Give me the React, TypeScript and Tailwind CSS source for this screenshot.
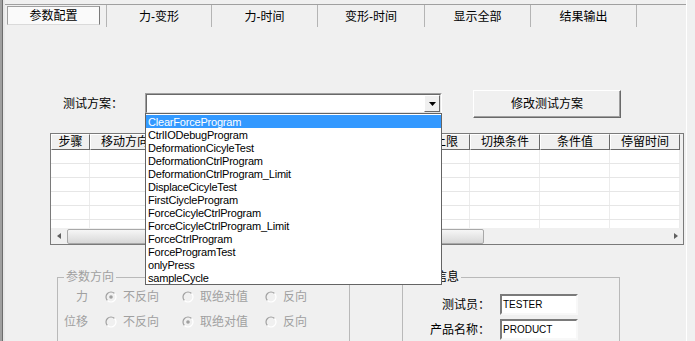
import React from 'react';

const tabs: [string, number][] = [
  ['参数配置', 102],
  ['力-变形', 105],
  ['力-时间', 106],
  ['变形-时间', 107],
  ['显示全部', 106],
  ['结果输出', 106],
];

const columns: [string, number][] = [
  ['步骤', 39],
  ['移动方向', 70],
  ['控制方式', 70],
  ['目标值', 70],
  ['速度', 60],
  ['下限', 62],
  ['上限', 48],
  ['切换条件', 70],
  ['条件值', 70],
  ['停留时间', 70],
];

const programs = [
  'ClearForceProgram',
  'CtrlIODebugProgram',
  'DeformationCicyleTest',
  'DeformationCtrlProgram',
  'DeformationCtrlProgram_Limit',
  'DisplaceCicyleTest',
  'FirstCiycleProgram',
  'ForceCicyleCtrlProgram',
  'ForceCicyleCtrlProgram_Limit',
  'ForceCtrlProgram',
  'ForceProgramTest',
  'onlyPress',
  'sampleCycle',
];

function Radio({ checked }: { checked?: boolean }) {
  return (
    <svg width="12" height="12" viewBox="0 0 12 12" className="shrink-0">
      <circle cx="6" cy="6" r="5" fill="#f0f0f0" />
      <path d="M2.46 9.54 A5 5 0 0 1 9.54 2.46" stroke="#a0a0a0" strokeWidth="1.2" fill="none" />
      <path d="M9.54 2.46 A5 5 0 0 1 2.46 9.54" stroke="#ffffff" strokeWidth="1.2" fill="none" />
      {checked && <circle cx="6" cy="6" r="1.8" fill="#a0a0a0" />}
    </svg>
  );
}

function RadioItem({ label, checked, w }: { label: string; checked?: boolean; w: string }) {
  return (
    <div className={`flex items-center gap-[6px] ${w}`}>
      <Radio checked={checked} />
      <span className="text-[#a0a0a0]">{label}</span>
    </div>
  );
}

function Arrow({ dir }: { dir: 'left' | 'right' | 'down' }) {
  const d = dir === 'left' ? 'M5 1 L1 4 L5 7 Z' : dir === 'right' ? 'M1 1 L5 4 L1 7 Z' : 'M0 1 L7 1 L3.5 5 Z';
  return (
    <svg width={dir === 'down' ? 7 : 6} height={dir === 'down' ? 6 : 8} viewBox={dir === 'down' ? '0 0 7 6' : '0 0 6 8'}>
      <path d={d} fill={dir === 'down' ? '#000' : '#606060'} />
    </svg>
  );
}

export default function App() {
  return (
    <div className="relative flex w-[695px] h-[341px] overflow-hidden bg-[#f0f0f0] text-[12px] leading-[16px] text-black font-['Liberation_Sans','Noto_Sans_CJK_SC',sans-serif]">
      {/* left frame edge */}
      <div className="flex h-full w-[5px] shrink-0">
        <div className="w-[2px] bg-[#a0a0a0]" />
        <div className="w-[1px] bg-[#6d6d6d]" />
        <div className="w-[2px] bg-[#e8e8e8]" />
      </div>

      <div className="flex w-[681px] shrink-0 flex-col pt-[4px]">
        {/* tabs */}
        <div className="flex h-[23px] border-t border-[#a0a0a0]">
          {tabs.map(([t, w], i) => (
            <div key={t} style={{ width: w }} className="flex h-[22px] shrink-0 border-r border-[#b4b4b4] pt-[1px]">
              {i === 0 ? (
                <div className="ml-[2px] flex h-[19px] w-[93px] items-center justify-center border-t border-l border-[#a0a0a0] border-r-[#7a7a7a] border-r border-b border-b-[#dadada] bg-[#fafafa]">
                  {t}
                </div>
              ) : (
                <div className="flex w-full items-center justify-center">{t}</div>
              )}
            </div>
          ))}
        </div>

        {/* test plan row */}
        <div className="mt-[63px] flex h-[28px] items-start pl-[58px]">
          <div className="mt-[6px] w-[82px]">测试方案：</div>
          <div className="mt-[3px] flex h-[21px] w-[297px] border border-t-[#a0a0a0] border-l-[#a0a0a0] border-r-white border-b-white">
            <div className="flex flex-1 justify-end border border-t-[#696969] border-l-[#696969] border-r-[#e3e3e3] border-b-[#e3e3e3] bg-white">
              <div className="flex h-[17px] w-[16px] items-center justify-center border border-t-white border-l-white border-r-[#696969] border-b-[#696969] bg-[#f0f0f0]">
                <Arrow dir="down" />
              </div>
            </div>
          </div>
          <div className="ml-[31px] flex h-[28px] w-[148px] items-center justify-center border border-t-white border-l-white border-r-[#696969] border-b-[#696969] bg-[#f0f0f0] shadow-[inset_-1px_-1px_0_#a0a0a0]">
            修改测试方案
          </div>
        </div>

        {/* grid */}
        <div className="ml-[45px] mt-[15px] flex h-[112px] w-[634px] flex-col border border-[#7a7a7a] bg-[#f0f0f0]">
          <div className="flex h-[16px]">
            {columns.map(([c, w]) => (
              <div
                key={c}
                style={{ width: w }}
                className="flex shrink-0 items-center justify-center overflow-hidden whitespace-nowrap border-t border-l border-t-white border-l-white border-r border-b border-r-[#696969] border-b-[#696969] leading-[14px]"
              >
                {c}
              </div>
            ))}
          </div>
          <div className="flex h-[78px] flex-col">
            {[0, 1, 2, 3, 4, 5].map(r => (
              <div key={r} className={`flex w-[629px] bg-white ${r < 5 ? 'h-[14px] border-b border-[#e6e6e6]' : 'h-[8px]'}`}>
                {columns.map(([c, w]) => (
                  <div key={c} style={{ width: w }} className="shrink-0 border-r border-[#ececec]" />
                ))}
              </div>
            ))}
          </div>
          <div className="flex h-[16px] items-center bg-[#f0f0f0]">
            <div className="flex h-full w-[16px] items-center justify-center">
              <Arrow dir="left" />
            </div>
            <div className="h-[15px] w-[417px] rounded-[2px] border border-[#a8a8a8] bg-gradient-to-b from-[#f6f6f6] to-[#d8d8d8]" />
            <div className="flex-1" />
            <div className="flex h-full w-[14px] items-center justify-center">
              <Arrow dir="right" />
            </div>
          </div>
        </div>

        {/* bottom group boxes */}
        <div className="ml-[52px] mt-[24px] flex">
          <fieldset className="h-[90px] w-[293px] shrink-0 border border-[#b9b9b9] px-0">
            <legend className="ml-[6px] px-[2px] text-[#a0a0a0]">参数方向</legend>
            <div className="flex h-[24px] items-center">
              <div className="w-[30px] text-right text-[#a0a0a0]">力</div>
              <div className="ml-[17px] flex">
                <RadioItem label="不反向" checked w="w-[77px]" />
                <RadioItem label="取绝对值" w="w-[83px]" />
                <RadioItem label="反向" w="w-[60px]" />
              </div>
            </div>
            <div className="flex h-[25px] items-center">
              <div className="w-[30px] text-right text-[#a0a0a0]">位移</div>
              <div className="ml-[17px] flex">
                <RadioItem label="不反向" w="w-[77px]" />
                <RadioItem label="取绝对值" checked w="w-[83px]" />
                <RadioItem label="反向" w="w-[60px]" />
              </div>
            </div>
          </fieldset>
          <fieldset className="ml-[52px] h-[90px] w-[218px] shrink-0 border border-[#b9b9b9] px-0">
            <legend className="ml-[6px] px-[2px]">测试信息</legend>
            <div className="mt-[9px] flex items-center">
              <div className="w-[87px] text-right">测试员：</div>
              <div className="ml-[10px] flex h-[21px] w-[78px] items-center border-2 border-t-[#7a7a7a] border-l-[#7a7a7a] border-r-[#f8f8f8] border-b-[#f8f8f8] bg-white pl-[1px] text-[10px]">
                TESTER
              </div>
            </div>
            <div className="mt-[4px] flex items-center">
              <div className="w-[87px] text-right">产品名称：</div>
              <div className="ml-[10px] flex h-[21px] w-[78px] items-center border-2 border-t-[#7a7a7a] border-l-[#7a7a7a] border-r-[#f8f8f8] border-b-[#f8f8f8] bg-white pl-[1px] text-[10px]">
                PRODUCT
              </div>
            </div>
          </fieldset>
        </div>
      </div>

      {/* right frame edge */}
      <div className="h-full w-[1px] shrink-0 bg-white" />
      <div className="h-full flex-1 bg-[#f0f0f0]" />

      {/* open combo dropdown list */}
      <div className="absolute left-[145px] top-[113px] w-[297px] border border-[#646464] bg-white pt-[1px] text-[11px] tracking-[-0.2px]">
        {programs.map((p, i) => (
          <div
            key={p}
            className={`h-[13px] whitespace-nowrap pl-[2px] leading-[14px] ${i === 0 ? 'bg-[#3399ff] text-white' : 'text-black'}`}
          >
            {p}
          </div>
        ))}
      </div>
    </div>
  );
}
